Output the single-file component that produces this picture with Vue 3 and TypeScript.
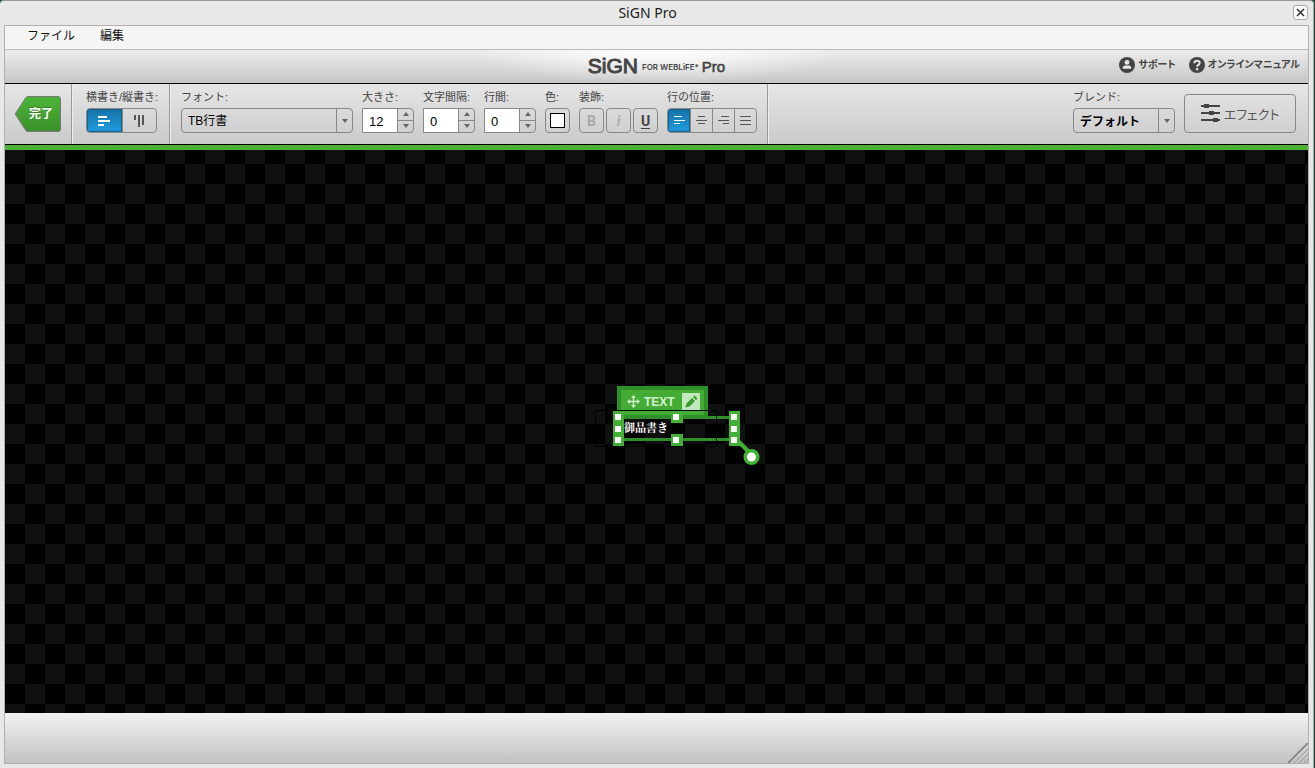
<script setup lang="ts">
import { ref } from 'vue'

interface Spinner {
  id: string
  label: string
  value: number
}

const menus = ['ファイル', '編集']
const spinners = ref<Spinner[]>([
  { id: 'size', label: '大きさ:', value: 12 },
  { id: 'tracking', label: '文字間隔:', value: 0 },
  { id: 'leading', label: '行間:', value: 0 },
])
const direction = ref<'horizontal' | 'vertical'>('horizontal')
const align = ref('left')
const aligns = [
  { id: 'left', label: '左揃え', d: 'M0 1.5h8M0 5.500h11M0 8.500h6' },
  { id: 'center', label: '中央揃え', d: 'M2 1.500h7M0 5.500h11M2 8.500h7' },
  { id: 'right', label: '右揃え', d: 'M3 1.500h8M0 5.500h11M5 8.500h6' },
  { id: 'justify', label: '両端揃え', d: 'M0 1.500h11M0 5.500h11M0 9.500h11' },
]
const handles = [
  [30, 36], [30, 48], [30, 59],
  [88, 36], [88, 59],
  [146, 36], [146, 48], [146, 59],
]
</script>

<template>
  <div class="desktop">
    <div class="window">
      <header class="titlebar">
        <h1>SiGN Pro</h1>
        <button class="close" type="button" aria-label="閉じる">
          <svg width="9" height="9" viewBox="0 0 9 9"><path d="M1 1l7 7M8 1l-7 7" /></svg>
        </button>
      </header>

      <div class="body">
        <nav class="menubar">
          <button v-for="m in menus" :key="m" type="button">{{ m }}</button>
        </nav>

        <div class="brandbar">
          <div class="logo">
            <span class="sign">SiGN</span><span class="for">FOR WEBLiFE*</span><span class="pro">Pro</span>
          </div>
          <div class="help">
            <a href="#support">
              <svg width="16" height="16" viewBox="0 0 16 16">
                <circle cx="8" cy="8" r="8" fill="#444" />
                <circle cx="8" cy="5.4" r="2.4" fill="#e6e6e6" />
                <path d="M3.8 11.8v-1.4q0-1.6 2-2h4.400q2 .4 2 2v1.400z" fill="#e6e6e6" />
              </svg>
              サポート
            </a>
            <a href="#manual">
              <svg width="16" height="16" viewBox="0 0 16 16">
                <circle cx="8" cy="8" r="8" fill="#444" />
                <path d="M5.400 6.200C5.400 2.900 10.800 3 10.700 6c0 1.800-2.600 1.900-2.600 3.700" fill="none" stroke="#e6e6e6" stroke-width="2" />
                <rect x="7" y="11" width="2.200" height="2.200" fill="#e6e6e6" />
              </svg>
              オンラインマニュアル
            </a>
          </div>
        </div>

        <div class="toolbar">
          <div class="section done-section">
            <button class="done" type="button">
              <svg width="46" height="36" viewBox="0 0 46 36" aria-hidden="true">
                <defs>
                  <linearGradient id="doneFill" x1="0" y1="0" x2="0" y2="1">
                    <stop offset="0" stop-color="#4db538" />
                    <stop offset="1" stop-color="#3a8f2b" />
                  </linearGradient>
                </defs>
                <path d="M12.500 .5H43q2.500 0 2.500 2.500v30q0 2.500-2.500 2.500H12.500q-1 0-1.600-1L.8 19q-.5-1 0-2L10.900 1.500q.6-1 1.600-1z" fill="url(#doneFill)" stroke="#777" />
              </svg>
              <span>完了</span>
            </button>
          </div>

          <div class="section dir-section">
            <div class="field">
              <span class="caption">横書き/縦書き:</span>
              <div class="segment wide">
                <button type="button" aria-label="横書き" :class="{ on: direction === 'horizontal' }" @click="direction = 'horizontal'">
                  <svg width="12" height="12" viewBox="0 0 12 12"><path d="M0 2h9M0 6h12M0 10h6" stroke-width="2" /></svg>
                </button>
                <button type="button" aria-label="縦書き" :class="{ on: direction === 'vertical' }" @click="direction = 'vertical'">
                  <svg width="12" height="12" viewBox="0 0 12 12"><path d="M2 0v5M6 0v12M10 0v10" stroke-width="2" /></svg>
                </button>
              </div>
            </div>
          </div>

          <div class="section text-section">
            <div class="field">
              <label class="caption" for="font">フォント:</label>
              <div class="dropdown font">
                <select id="font"><option>TB行書</option></select>
                <i></i>
              </div>
            </div>
            <div v-for="s in spinners" :key="s.id" class="field">
              <label class="caption" :for="s.id">{{ s.label }}</label>
              <div class="spinner">
                <input :id="s.id" v-model.number="s.value" type="text" />
                <div class="steps">
                  <button type="button" aria-label="増やす" @click="s.value++"><i class="up"></i></button>
                  <button type="button" aria-label="減らす" @click="s.value--"><i class="down"></i></button>
                </div>
              </div>
            </div>
            <div class="field">
              <span class="caption">色:</span>
              <button class="square" type="button" aria-label="文字色"><i class="swatch"></i></button>
            </div>
            <div class="field decor">
              <span class="caption">装飾:</span>
              <div class="squares">
                <button class="square b" type="button" disabled>B</button>
                <button class="square it" type="button" disabled>i</button>
                <button class="square u" type="button">U</button>
              </div>
            </div>
            <div class="field">
              <span class="caption">行の位置:</span>
              <div class="segment">
                <button v-for="a in aligns" :key="a.id" type="button" :aria-label="a.label" :class="{ on: align === a.id }" @click="align = a.id">
                  <svg width="11" height="11" viewBox="0 0 11 11"><path :d="a.d" /></svg>
                </button>
              </div>
            </div>
          </div>

          <div class="section blend-section">
            <div class="field">
              <label class="caption" for="blend">ブレンド:</label>
              <div class="dropdown blend">
                <select id="blend"><option>デフォルト</option></select>
                <i></i>
              </div>
            </div>
            <button class="effect" type="button">
              <svg width="19" height="19" viewBox="0 0 19 19">
                <path d="M0 2h19M0 9h19M0 16h19" />
                <path class="knobs" d="M3 2h5M8 9h5M12 16h5" />
              </svg>
              エフェクト
            </button>
          </div>
        </div>

        <main class="canvas">
          <div class="object">
            <div class="tag">
              <svg width="13" height="13" viewBox="0 0 13 13">
                <path d="M6.500 2v9M2 6.500h9" fill="none" stroke="#d6f0cf" stroke-width="1.400" />
                <path d="M6.500 0l2.500 3H4zM6.500 13L4 10h5zM0 6.500L3 4v5zM13 6.500L10 4v5z" fill="#d6f0cf" />
              </svg>
              <span>TEXT</span>
              <button type="button" aria-label="編集する">
                <svg width="18" height="18" viewBox="0 0 18 18">
                  <path d="M3.500 14.500l1-4L10 5l3 3-5.500 5.500zM11 4l1.500-1.500 3 3L14 7z" fill="#379a2c" />
                </svg>
              </button>
            </div>
            <p>御品書き</p>
            <svg class="frame" width="170" height="95" viewBox="0 0 170 95">
              <path d="M147 60L161 74" stroke="#42b035" stroke-width="4" />
              <path d="M34 37.500H141M34 59.500H141" stroke="#2f8f2b" stroke-width="3" />
              <rect class="bounds" x="5.500" y="30.500" width="121" height="36" />
              <rect x="23" y="31" width="11" height="35" fill="#42b035" />
              <rect x="139" y="31" width="11" height="35" fill="#42b035" />
              <rect x="81" y="31" width="12" height="12" fill="#42b035" />
              <rect x="81" y="54" width="12" height="12" fill="#42b035" />
              <rect v-for="h in handles" :key="h.join('-')" :x="h[0] - 5" :y="h[1] - 2" width="6" height="6" fill="#fff" />
              <circle cx="161.500" cy="77" r="8" fill="#42b035" />
              <circle cx="161.500" cy="77" r="4.500" fill="#fff" />
            </svg>
          </div>
        </main>

        <footer class="statusbar">
          <svg width="20" height="20" viewBox="0 0 20 20" aria-hidden="true">
            <path d="M0 20L20 0" stroke="#777" stroke-width="1.500" />
            <path d="M6 20L20 6M11 20L20 11M16 20l4-4" stroke="#999" />
          </svg>
        </footer>
      </div>
    </div>
  </div>
</template>

<style>
html,
body,
#app {
  height: 100%;
}
</style>

<style scoped>
* {
  box-sizing: border-box;
}
button,
input,
select {
  margin: 0;
  padding: 0;
  border: 0;
  background: none;
  font: inherit;
  color: inherit;
}
svg {
  display: block;
  flex: none;
}
.desktop {
  height: 100%;
  padding-right: 1px;
  background: #1f4a38;
  font: 12px 'Liberation Sans', 'Noto Sans CJK JP', sans-serif;
  color: #111;
}
.window {
  height: 100%;
  display: flex;
  flex-direction: column;
  padding: 0 4px 4px;
  background: #e8e8e8;
  border-top: 1px solid #999;
  border-right: 1px solid #aaa;
  border-radius: 4px 4px 0 0;
}
.titlebar {
  height: 24px;
  display: flex;
  align-items: center;
  position: relative;
  justify-content: center;
  padding: 0 18px 2px 0;
}
.titlebar h1 {
  margin: 0;
  font: 14px 'Noto Sans', sans-serif;
  color: #222;
}
.close {
  position: absolute;
  right: 1px;
  top: 4px;
  width: 15px;
  height: 15px;
  display: grid;
  place-items: center;
  border: 1px solid #aaa;
  border-radius: 3px;
  background: #fafafa;
}
.close svg path {
  stroke: #333;
  stroke-width: 1.5;
}
.body {
  flex: 1;
  display: flex;
  flex-direction: column;
  border: 1px solid #b4aeae;
}
.menubar {
  height: 24px;
  display: flex;
  gap: 25px;
  padding: 0 22px 6px;
  background: #f5f5f5;
  border-bottom: 1px solid #bbb;
}
.brandbar {
  height: 34px;
  display: grid;
  grid-template-columns: 1fr auto 1fr;
  align-items: center;
  background:
    radial-gradient(ellipse 190px 34px at 50% 0, #fff, rgba(255, 255, 255, 0)),
    linear-gradient(#ececec, #c6c6c6);
  border-bottom: 1px solid #000;
}
.logo {
  grid-column: 2;
  display: flex;
  align-items: center;
  padding-bottom: 1px;
  color: #444;
}
.sign {
  font: 21px/32px 'Liberation Sans', sans-serif;
  -webkit-text-stroke: 1px #444;
}
.for {
  margin: 2px 3px 0 4px;
  font: 600 8px Inter, sans-serif;
}
.pro {
  font: 15px 'Liberation Sans', sans-serif;
  -webkit-text-stroke: 0.6px #444;
}
.help {
  display: flex;
  justify-content: flex-end;
  gap: 13px;
  padding: 0 8px 3px 0;
}
.help a {
  display: flex;
  align-items: center;
  gap: 3px;
  font-size: 10px;
  font-weight: bold;
  font-feature-settings: 'palt';
  line-height: 16px;
  color: #444;
  text-decoration: none;
  white-space: nowrap;
}
.toolbar {
  height: 66px;
  display: flex;
  background: linear-gradient(#e6e6e6, #cacaca);
  border-bottom: 5px solid #4cb135;
  position: relative;
}
.toolbar::after {
  content: '';
  position: absolute;
  left: 0;
  right: 0;
  bottom: 0;
  height: 1px;
  background: #000;
}
.section {
  display: flex;
  gap: 9px;
  padding-top: 6px;
  border-right: 1px solid #999;
  box-shadow: 1px 0 #eee;
}
.done-section {
  width: 67px;
  padding: 12px 0 0 10px;
}
.dir-section {
  padding-left: 14px;
  width: 98px;
}
.text-section {
  padding: 6px 10px 0 11px;
}
.blend-section {
  margin-left: auto;
  padding-right: 12px;
  border: 0;
  box-shadow: none;
}
.done {
  position: relative;
  width: 46px;
  height: 36px;
  font-size: 12px;
  font-weight: bold;
  color: #fff;
}
.done span {
  position: absolute;
  inset: 0 0 0 6px;
  line-height: 36px;
  text-shadow: 0 -1px #378528;
}
.field {
  display: flex;
  flex-direction: column;
  gap: 4px;
}
.caption {
  height: 14px;
  font-size: 11px;
  line-height: 14px;
  color: #444;
  white-space: nowrap;
}
.segment {
  display: flex;
  height: 25px;
  border: 1px solid #888;
  border-radius: 4px;
  overflow: hidden;
}
.segment button {
  width: 22px;
  display: grid;
  place-items: center;
  border-left: 1px solid #888;
}
.segment button:first-child {
  border-left: 0;
}
.segment.wide {
  width: 71px;
}
.segment.wide button {
  width: 35px;
}
.segment svg path {
  stroke: #555;
  fill: none;
}
.segment .on {
  background: linear-gradient(#1673a8, #209cdf);
  box-shadow: inset 0 0 1px 1px #175f8a;
}
.segment .on svg path {
  stroke: #fff;
}
.dropdown {
  position: relative;
  height: 25px;
}
.dropdown.font {
  width: 172px;
}
.dropdown.blend {
  width: 102px;
  font-weight: bold;
}
.dropdown select {
  appearance: none;
  width: 100%;
  height: 100%;
  padding-left: 6px;
  border: 1px solid #888;
  border-radius: 4px;
  color: #000;
}
.dropdown.blend select {
  padding-top: 2px;
}
.dropdown i {
  position: absolute;
  top: 1px;
  right: 1px;
  bottom: 1px;
  width: 16px;
  border-left: 1px solid #888;
  display: grid;
  place-items: center;
  pointer-events: none;
}
.dropdown i::after,
.down {
  content: '';
  border: 3px solid transparent;
  border-top: 4px solid #666;
  border-bottom: 0;
}
.up {
  border: 3px solid transparent;
  border-bottom: 4px solid #666;
  border-top: 0;
}
.spinner {
  display: flex;
  width: 52px;
  height: 25px;
  border: 1px solid #888;
  border-radius: 0 4px 4px 0;
}
.spinner input {
  width: 35px;
  padding: 2px 0 0 6px;
  background: #fff;
  font-size: 13px;
  color: #000;
  border-right: 1px solid #888;
}
.steps {
  flex: 1;
  display: grid;
  grid-template-rows: 1fr 1fr;
}
.steps button {
  display: grid;
  place-items: center;
}
.steps button:first-child {
  border-bottom: 1px solid #888;
}
.square {
  width: 25px;
  height: 25px;
  display: grid;
  place-items: center;
  border: 1px solid #888;
  border-radius: 4px;
  font: bold 14px Roboto, sans-serif;
  color: #444;
}
.square:disabled {
  color: #aaa;
}
.swatch {
  width: 15px;
  height: 15px;
  background: #fff;
  border: 1px solid #000;
}
.squares {
  display: flex;
  gap: 2px;
}
.it {
  font-style: italic;
}
.u {
  text-decoration: underline;
  text-underline-offset: 2px;
}
.effect {
  display: flex;
  align-items: center;
  justify-content: center;
  gap: 4px;
  width: 112px;
  height: 39px;
  margin-top: 4px;
  padding-bottom: 1px;
  border: 1px solid #888;
  border-radius: 4px;
  font-size: 13px;
  font-feature-settings: 'palt';
  color: #555;
}
.effect svg path {
  stroke: #444;
  stroke-width: 2;
}
.effect svg .knobs {
  stroke-width: 4;
}
.canvas {
  flex: 1;
  position: relative;
  overflow: hidden;
  background: #000 repeating-conic-gradient(#000 0 25%, #101010 0 50%) 0 -6px / 40px 40px;
}
.object {
  position: absolute;
  left: calc((100% - 133px) / 2);
  top: 230px;
  width: 170px;
  height: 95px;
}
.bounds {
  fill: none;
  stroke: #000;
}
.tag {
  position: absolute;
  left: 27px;
  top: 6px;
  width: 91px;
  height: 33px;
  display: flex;
  align-items: center;
  gap: 4px;
  padding: 1px 4px 3px 6px;
  border: 4px solid #2f8f2b;
  background: #44ab35;
  color: #d6f0cf;
  font: bold 12px 'Liberation Sans', sans-serif;
}
.tag button {
  margin-left: auto;
  width: 18px;
  height: 18px;
  background: #c3e8bd;
}
.object p {
  position: absolute;
  left: 34px;
  top: 38px;
  margin: 0;
  font: bold 11px/18px 'Noto Serif CJK JP', 'Noto Sans CJK JP', serif;
  color: #fff;
}
.frame {
  position: absolute;
  inset: 0;
}
.statusbar {
  height: 50px;
  display: flex;
  justify-content: flex-end;
  align-items: flex-end;
  background: linear-gradient(#f2f2f2, #c2c2c2);
}
</style>
